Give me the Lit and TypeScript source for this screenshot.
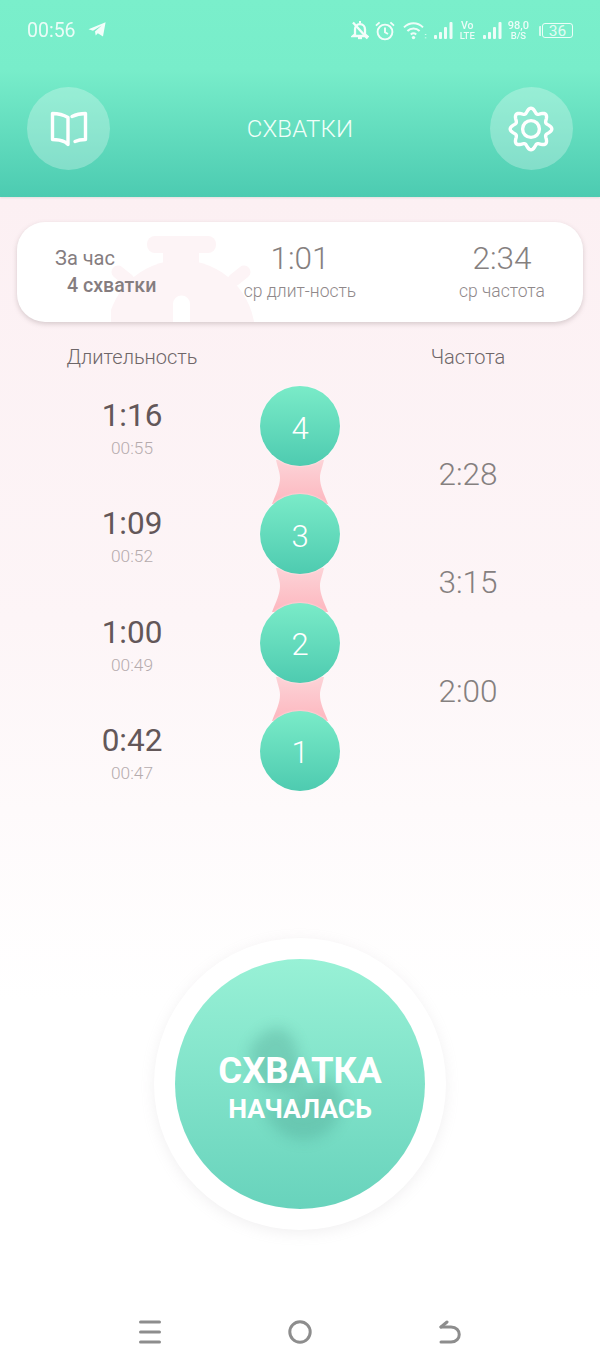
import { LitElement, html, css, svg } from "lit";
import { customElement } from "lit/decorators.js";

const gearPath = (() => {
  const pts: string[] = [];
  for (let i = 0; i < 160; i++) {
    const t = (i / 160) * Math.PI * 2;
    const r = 18.4 + 2.4 * Math.cos(8 * t);
    pts.push(`${(24 + r * Math.cos(t)).toFixed(2)} ${(24 + r * Math.sin(t)).toFixed(2)}`);
  }
  return "M" + pts.join("L") + "Z";
})();

const rows = [
  { n: 4, dur: "1:16", at: "00:55", freq: "2:28" },
  { n: 3, dur: "1:09", at: "00:52", freq: "3:15" },
  { n: 2, dur: "1:00", at: "00:49", freq: "2:00" },
  { n: 1, dur: "0:42", at: "00:47", freq: "" },
];

const signal = svg`<svg class="ic" width="19" height="18" viewBox="0 0 19 18"><g fill="#fff" opacity=".88"><rect x="0" y="13" width="3" height="4" rx="1"/><rect x="5" y="10" width="3" height="7" rx="1"/><rect x="10" y="5" width="3" height="12" rx="1"/><rect x="15.500" y="0" width="3" height="17" rx="1"/></g></svg>`;

@customElement("app-root")
export class AppRoot extends LitElement {
  static styles = css`
    :host {
      display: block;
      width: 600px;
      height: 1366px;
      overflow: hidden;
      font-family: Roboto, "Noto Sans", sans-serif;
    }
    .page {
      height: 1366px;
      display: flex;
      flex-direction: column;
      background: linear-gradient(180deg, #fcf0f3 197px, #fdf5f7 620px, #ffffff 1000px);
    }
    .head {
      height: 197px;
      box-sizing: border-box;
      background: linear-gradient(180deg, #7aefcb 0, #78edca 70px, #4ccbb1 197px);
      box-shadow: 0 1px 2px rgba(120, 150, 140, 0.2);
      color: #fff;
      flex: none;
    }
    .status {
      height: 60px;
      box-sizing: border-box;
      padding: 19px 27px 0 27px;
      display: flex;
      align-items: flex-start;
    }
    .clock {
      font-size: 19.500px;
      line-height: 23px;
      opacity: 0.85;
      width: 61px;
    }
    .tg { margin-top: 3px; }
    .sys {
      margin-left: auto;
      display: flex;
      align-items: center;
      height: 23px;
    }
    .ic { display: block; flex: none; }
    .two {
      display: flex;
      flex-direction: column;
      align-items: center;
      font-size: 10.500px;
      line-height: 9.500px;
      font-weight: 500;
      opacity: 0.85;
      flex: none;
    }
    .wide { font-size: 11px; }
    .under { font-size: 9.500px; }
    .batt {
      display: flex;
      align-items: center;
      justify-content: center;
      width: 29px;
      height: 13px;
      margin-left: 1px;
      border: 1.500px solid rgba(255, 255, 255, 0.85);
      border-radius: 3px;
      font-size: 15.500px;
      color: rgba(255, 255, 255, 0.8);
    }
    .nub {
      width: 2px;
      height: 10px;
      border-radius: 1px 0 0 1px;
      background: rgba(255, 255, 255, 0.7);
    }
    .bar {
      display: flex;
      align-items: center;
      justify-content: space-between;
      padding: 27px 27px 0 27px;
    }
    .round {
      width: 83px;
      height: 83px;
      border-radius: 50%;
      background: rgba(255, 255, 255, 0.27);
      display: flex;
      align-items: center;
      justify-content: center;
    }
    .title {
      font-size: 24px;
      font-weight: 300;
      letter-spacing: 0.2px;
      color: #f0fff9;
    }
    .card {
      position: relative;
      overflow: hidden;
      margin: 25px 17px 0;
      height: 100px;
      box-sizing: border-box;
      border-radius: 28px;
      background: #fff;
      box-shadow: 0 2px 5px rgba(120, 100, 105, 0.28);
      display: grid;
      grid-template-columns: 183px 200px 183px;
      align-items: center;
    }
    .mark { position: absolute; left: 94px; top: 14px; }
    .cell { position: relative; text-align: center; margin-top: 0; }
    .cell.left {
      text-align: left;
      padding-left: 38px;
      font-size: 20px;
      font-weight: 400;
      color: #857d7f;
      line-height: 27px;
      margin-top: -1px;
    }
    .left div + div { padding-left: 12px; font-size: 19.600px; font-weight: 500; }
    .right { padding-left: 21px; }
    .big { font-size: 31.500px; font-weight: 300; line-height: 36px; color: #85807f; }
    .small { font-size: 17.500px; font-weight: 300; line-height: 24px; color: #8f888a; margin-top: 2px; }
    .cols {
      display: grid;
      grid-template-columns: 264px 72px 264px;
      margin-top: 22px;
      text-align: center;
      font-size: 20px;
      font-weight: 300;
      line-height: 26px;
      color: #6e6668;
    }
    .track {
      display: grid;
      grid-template-columns: 264px 72px 264px;
      grid-auto-rows: 54.170px;
      margin-top: 16px;
      text-align: center;
    }
    .dur { grid-column: 1; padding-top: 11px; }
    .dur b { display: block; font-size: 31.500px; font-weight: 400; line-height: 38px; color: #635759; }
    .dur span { display: block; font-size: 17.300px; font-weight: 300; line-height: 26px; color: #b5abad; }
    .freq { grid-column: 3; font-size: 31.500px; font-weight: 300; line-height: 38px; color: #85807f; padding-top: 16px; }
    .spine {
      grid-column: 2;
      grid-row: 1 / span 8;
      position: relative;
      display: flex;
      flex-direction: column;
      align-items: center;
      gap: 28.330px;
    }
    .node {
      position: relative;
      width: 80px;
      height: 80px;
      box-sizing: border-box;
      padding-top: 4px;
      flex: none;
      border-radius: 50%;
      background: linear-gradient(180deg, #7aebc8, #4ecbb0);
      box-shadow: 0 0 2px rgba(255, 255, 255, 0.8);
      color: #fff;
      font-size: 31px;
      font-weight: 300;
      display: flex;
      align-items: center;
      justify-content: center;
      z-index: 1;
    }
    .link { position: absolute; left: 5px; }
    .go {
      margin: auto auto 0;
      width: 292px;
      height: 292px;
      border-radius: 50%;
      background: #fff;
      box-shadow: 0 3px 14px rgba(170, 160, 165, 0.16);
      display: flex;
      align-items: center;
      justify-content: center;
      flex: none;
    }
    .disc {
      position: relative;
      overflow: hidden;
      width: 250px;
      height: 250px;
      border-radius: 50%;
      background: linear-gradient(180deg, #98f1d6, #68d3bc);
      color: #fff;
      text-align: center;
      display: flex;
      flex-direction: column;
      align-items: center;
      justify-content: center;
      padding-top: 6px;
      box-sizing: border-box;
    }
    .baby { position: absolute; left: 0; top: 0; }
    .go1 { position: relative; font-size: 36.500px; font-weight: 700; line-height: 42px; margin-top: 1px; }
    .go2 { position: relative; font-size: 26.600px; font-weight: 700; line-height: 34px; }
    .nav {
      flex: none;
      height: 136px;
      box-sizing: border-box;
      padding-top: 90px;
      display: flex;
      justify-content: center;
      gap: 127px;
    }
  `;

  render() {
    return html`<div class="page">
      <header class="head">
        <div class="status">
          <span class="clock">00:56</span>
          <svg class="ic tg" width="18" height="15" viewBox="0 0 18 15"><path fill="#fff" opacity=".9" d="M0.500 7.200 17.600 0.300 15 14.600 9.800 11.200 7.700 13.600 7 9.400 13.600 3.400 5 8.800Z"/></svg>
          <div class="sys">
            <svg class="ic" width="18" height="19" viewBox="0 0 18 19" fill="none" stroke="#fff" stroke-width="2.300" opacity=".92"><path d="M4 13.500V8.500C4 5.500 6 3.200 9 3.200S14 5.500 14 8.500V13.500L15.800 15H2.200Z"/><path d="M7 17H11" /><path d="M8 .8H10"/><path d="M2 1.500 16.500 17.500"/></svg>
            <svg class="ic" style="margin-left:6px" width="20" height="20" viewBox="0 0 20 20" fill="none" stroke="#fff" stroke-width="1.900" opacity=".9"><circle cx="10" cy="11" r="7.400"/><path d="M10 6.500V11.300L13 13"/><path d="M1 4.600 4.600 1.400M19 4.600 15.400 1.400"/></svg>
            <svg class="ic" style="margin-left:8px" width="24" height="19" viewBox="0 0 24 19" fill="none" stroke="#fff" stroke-width="2" opacity=".88"><path d="M1 6.400C6.600 1 14.400 1 20 6.400"/><path d="M4.400 10C8 6.600 13 6.600 16.600 10"/><path d="M7.800 13.400C9.500 11.900 11.500 11.900 13.200 13.400"/><circle cx="10.500" cy="16.600" r="1.700" fill="#fff" stroke="none"/><path d="M22.600 13V13.800M22.600 16.400V17.200" stroke-width="1.500"/></svg>
            <span style="margin-left:7px;display:block">${signal}</span>
            <div class="two" style="margin-left:7px"><span>Vo</span><span class="under">LTE</span></div>
            <span style="margin-left:8px;display:block">${signal}</span>
            <div class="two wide" style="margin-left:6px"><span>98,0</span><span class="under">B/S</span></div>
            <span class="nub" style="margin-left:10px"></span>
            <span class="batt">36</span>
          </div>
        </div>
        <div class="bar">
          <div class="round">
            <svg class="ic" width="38" height="36" viewBox="0 0 38 36" fill="none" stroke="#fff" stroke-width="3.400" stroke-linejoin="round" stroke-linecap="round"><path d="M18 33.500 15 31C11 29 6 28.500 2.500 28.500V2.500C7 2.500 13 3.500 18 6.500Z"/><path d="M22 5.500C26 3.500 31 2.500 35.500 2.500V28.500C32 28.500 28 29 25 30.500"/></svg>
          </div>
          <div class="title">СХВАТКИ</div>
          <div class="round">
            <svg class="ic" width="48" height="48" viewBox="0 0 48 48" fill="none" stroke="#fff" stroke-width="3.400"><path d=${gearPath}/><circle cx="24" cy="24" r="8.400"/></svg>
          </div>
        </div>
      </header>

      <section class="card">
        <svg class="mark" width="176" height="86" viewBox="0 0 176 86">
          <g fill="#fdf4f6">
            <rect x="36" y="0" width="69" height="17" rx="8"/>
            <rect x="52" y="14" width="36" height="20" />
            <circle cx="70" cy="98" r="74"/>
          </g>
          <path stroke="#fdf4f6" stroke-width="13" stroke-linecap="round" d="M7 36 17 44M133 36 123 44"/>
          <path fill="#fff" d="M62 86V68A8.500 8.500 0 0 1 79 68V86Z"/>
        </svg>
        <div class="cell left"><div>За час</div><div>4 схватки</div></div>
        <div class="cell"><div class="big">1:01</div><div class="small">ср длит-ность</div></div>
        <div class="cell right"><div class="big">2:34</div><div class="small">ср частота</div></div>
      </section>

      <div class="cols"><span>Длительность</span><span></span><span>Частота</span></div>

      <div class="track">
        ${rows.map(
          (r, i) => html`<div class="dur" style="grid-row:${i * 2 + 1} / span 2"><b>${r.dur}</b><span>${r.at}</span></div>
            ${r.freq
              ? html`<div class="freq" style="grid-row:${i * 2 + 2} / span 2">${r.freq}</div>`
              : ""}`
        )}
        <div class="spine">
          <svg width="0" height="0" style="position:absolute"><defs><linearGradient id="pk" x1="0" y1="0" x2="0" y2="1"><stop offset="0" stop-color="#fcd3d7"/><stop offset="1" stop-color="#fdb7bf"/></linearGradient></defs></svg>
          ${rows.map(
            (r, i) => html`<div class="node">${r.n}</div>${i < 3
                ? html`<svg class="link" style="top:${i * 108.33 + 74}px" width="62" height="44" viewBox="0 0 62 44"><path fill="url(#pk)" d="M7 0H55C53 9 51 12 51 18 51 26 55 34 59 44H3C7 34 11 26 11 18 11 12 9 9 7 0Z"/></svg>`
                : ""}`
          )}
        </div>
      </div>

      <div class="go">
        <div class="disc">
          <svg class="baby" width="250" height="250" viewBox="0 0 250 250">
            <defs><filter id="b" x="-30%" y="-30%" width="160%" height="160%"><feGaussianBlur stdDeviation="7"/></filter></defs>
            <g fill="#3f8f80" opacity=".27" filter="url(#b)">
              <path d="M74 92C90 60 118 62 122 92 124 108 138 118 128 132 108 138 88 132 80 118Z"/>
              <path d="M86 146C112 156 130 130 150 118 170 126 172 150 158 168 136 190 100 184 86 146Z"/>
            </g>
          </svg>
          <div class="go1">СХВАТКА</div>
          <div class="go2">НАЧАЛАСЬ</div>
        </div>
      </div>

      <nav class="nav">
        <svg class="ic" width="22" height="24" viewBox="0 0 22 24" stroke="#8d8d8d" stroke-width="3" stroke-linecap="round"><path d="M1.500 2H20.500M1.500 12H20.500M1.500 22H20.500"/></svg>
        <svg class="ic" width="24" height="24" viewBox="0 0 24 24" fill="none" stroke="#8d8d8d" stroke-width="3"><circle cx="12" cy="12" r="10.200"/></svg>
        <svg class="ic" width="22" height="24" viewBox="0 0 22 24" fill="none" stroke="#8d8d8d" stroke-width="3" stroke-linecap="round" stroke-linejoin="round"><path d="M2 7H12C23 7 23 22 12 22H2"/><path d="M8 2 2 7"/></svg>
      </nav>
    </div>`;
  }
}
